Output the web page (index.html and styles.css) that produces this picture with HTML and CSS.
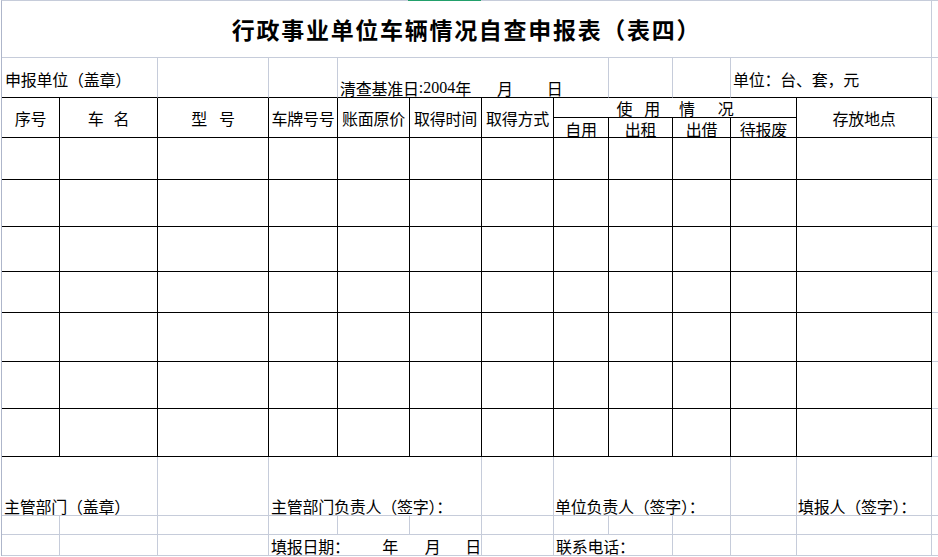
FILE: index.html
```html
<!DOCTYPE html>
<html lang="zh-CN">
<head>
<meta charset="utf-8">
<title>行政事业单位车辆情况自查申报表（表四）</title>
<link rel="stylesheet" href="styles.css">
</head>
<body>
<div class="sheet">
  <div class="sel"></div>
  <div class="grid">
    <!-- title row -->
    <div class="c title s12">行政事业单位车辆情况自查申报表（表四）</div>
    <div class="c edge"></div>

    <!-- unit row -->
    <div class="c kb s2 mid pl3">申报单位（盖章）</div>
    <div class="c kb"></div>
    <div class="c kb"></div>
    <div class="c kb s4 bot pl2">清查基准日<span class="latin">:2004</span>年<span class="sp w26"> </span>月<span class="sp w34"> </span>日</div>
    <div class="c kb"></div>
    <div class="c kb"></div>
    <div class="c kb s2 mid pl2">单位：台、套，元</div>
    <div class="c edge"></div>

    <!-- header -->
    <div class="c k h r2">序号</div>
    <div class="c k h r2">车<span class="sp w10"> </span>名</div>
    <div class="c k h r2">型<span class="sp w12"> </span>号</div>
    <div class="c k h r2">车牌号号</div>
    <div class="c k h r2">账面原价</div>
    <div class="c k h r2">取得时间</div>
    <div class="c k h r2">取得方式</div>
    <div class="c k h s4 use">使<span class="sp w12"> </span>用<span class="sp w19"> </span>情<span class="sp w23"> </span>况</div>
    <div class="c k h r2">存放地点</div>
    <div class="c edge r2"></div>
    <div class="c k h sub">自用</div>
    <div class="c k h sub">出租</div>
    <div class="c k h sub">出借</div>
    <div class="c k h sub">待报废</div>

    <!-- data rows -->
    <div class="c k"></div><div class="c k"></div><div class="c k"></div><div class="c k"></div><div class="c k"></div><div class="c k"></div><div class="c k"></div><div class="c k"></div><div class="c k"></div><div class="c k"></div><div class="c k"></div><div class="c k"></div><div class="c edge"></div>
    <div class="c k"></div><div class="c k"></div><div class="c k"></div><div class="c k"></div><div class="c k"></div><div class="c k"></div><div class="c k"></div><div class="c k"></div><div class="c k"></div><div class="c k"></div><div class="c k"></div><div class="c k"></div><div class="c edge"></div>
    <div class="c k"></div><div class="c k"></div><div class="c k"></div><div class="c k"></div><div class="c k"></div><div class="c k"></div><div class="c k"></div><div class="c k"></div><div class="c k"></div><div class="c k"></div><div class="c k"></div><div class="c k"></div><div class="c edge"></div>
    <div class="c k"></div><div class="c k"></div><div class="c k"></div><div class="c k"></div><div class="c k"></div><div class="c k"></div><div class="c k"></div><div class="c k"></div><div class="c k"></div><div class="c k"></div><div class="c k"></div><div class="c k"></div><div class="c edge"></div>
    <div class="c k"></div><div class="c k"></div><div class="c k"></div><div class="c k"></div><div class="c k"></div><div class="c k"></div><div class="c k"></div><div class="c k"></div><div class="c k"></div><div class="c k"></div><div class="c k"></div><div class="c k"></div><div class="c edge"></div>
    <div class="c k"></div><div class="c k"></div><div class="c k"></div><div class="c k"></div><div class="c k"></div><div class="c k"></div><div class="c k"></div><div class="c k"></div><div class="c k"></div><div class="c k"></div><div class="c k"></div><div class="c k"></div><div class="c edge"></div>
    <div class="c k"></div><div class="c k"></div><div class="c k"></div><div class="c k"></div><div class="c k"></div><div class="c k"></div><div class="c k"></div><div class="c k"></div><div class="c k"></div><div class="c k"></div><div class="c k"></div><div class="c k"></div><div class="c edge"></div>

    <!-- signature row -->
    <div class="c s2 bot pl2">主管部门（盖章）</div>
    <div class="c"></div>
    <div class="c s3 bot pl2">主管部门负责人（签字）：</div>
    <div class="c"></div>
    <div class="c s3 bot pl1">单位负责人（签字）：</div>
    <div class="c"></div>
    <div class="c bot pl1">填报人（签字）：</div>
    <div class="c edge"></div>

    <!-- blank row -->
    <div class="c"></div><div class="c"></div><div class="c"></div><div class="c"></div><div class="c"></div><div class="c"></div><div class="c"></div><div class="c"></div><div class="c"></div><div class="c"></div><div class="c"></div><div class="c"></div><div class="c edge"></div>

    <!-- date row -->
    <div class="c"></div>
    <div class="c"></div>
    <div class="c"></div>
    <div class="c s3 bot pl2">填报日期：<span class="sp w33"> </span>年<span class="sp w27"> </span>月<span class="sp w25"> </span>日</div>
    <div class="c"></div>
    <div class="c s2 bot pl2">联系电话：</div>
    <div class="c"></div>
    <div class="c"></div>
    <div class="c"></div>
    <div class="c edge"></div>
  </div>
</div>
</body>
</html>
```

FILE: styles.css
```css
:root {
  --grid: #c6ccda;
  --ink: #000;
}

* {
  box-sizing: border-box;
}

html,
body {
  margin: 0;
  padding: 0;
  overflow: hidden;
  background: #fff;
}

body {
  font-family: "Noto Sans CJK SC", "Noto Sans CJK JP", sans-serif;
  font-size: 16px;
  letter-spacing: -0.25px;
  color: var(--ink);
}

.sheet {
  position: relative;
  margin-left: 1px;
  border-left: 1px solid #aeb6ca;
  border-top: 1px solid var(--grid);
}

.sel {
  position: absolute;
  top: -1px;
  left: 406px;
  width: 73px;
  height: 1px;
  background: #22a06b;
}

.grid {
  display: grid;
  grid-template-columns: 58px 98px 111px 69px 72px 72px 72px 55px 64px 58px 66px 135px 6px;
  grid-template-rows: 57px 40px 20px 20px 42px 47px 45px 41px 49px 47px 48px 59px 19px 21px;
}

.c {
  display: flex;
  align-items: center;
  min-width: 0;
  white-space: nowrap;
  line-height: 1;
  border-right: 1px solid var(--grid);
  border-bottom: 1px solid var(--grid);
}

.k {
  border-right-color: #000;
  border-bottom-color: #000;
}

.kb {
  border-bottom-color: #000;
}

.edge {
  border-right: none;
}

.s2 { grid-column: span 2; }
.s3 { grid-column: span 3; }
.s4 { grid-column: span 4; }
.s12 { grid-column: span 12; }
.r2 { grid-row: span 2; }

.h {
  justify-content: center;
}

.title {
  justify-content: center;
  font-size: 23px;
  font-weight: 700;
  letter-spacing: 1.7px;
}

.mid {
  align-items: center;
  padding-top: 2px;
}

.bot {
  align-items: flex-end;
  padding-bottom: 1px;
}

.use {
  align-items: center;
}

.sub {
  align-items: flex-start;
  padding-top: 3px;
}

.pl1 { padding-left: 1px; }
.pl2 { padding-left: 2px; }
.pl3 { padding-left: 3px; }

.latin {
  font-family: "Liberation Serif", serif;
  letter-spacing: 0;
  line-height: 1;
}

.sp {
  display: inline-block;
}

.w10 { width: 10px; }
.w12 { width: 12px; }
.w19 { width: 19px; }
.w23 { width: 23px; }
.w25 { width: 25px; }
.w26 { width: 26px; }
.w27 { width: 27px; }
.w33 { width: 33px; }
.w34 { width: 34px; }
```
